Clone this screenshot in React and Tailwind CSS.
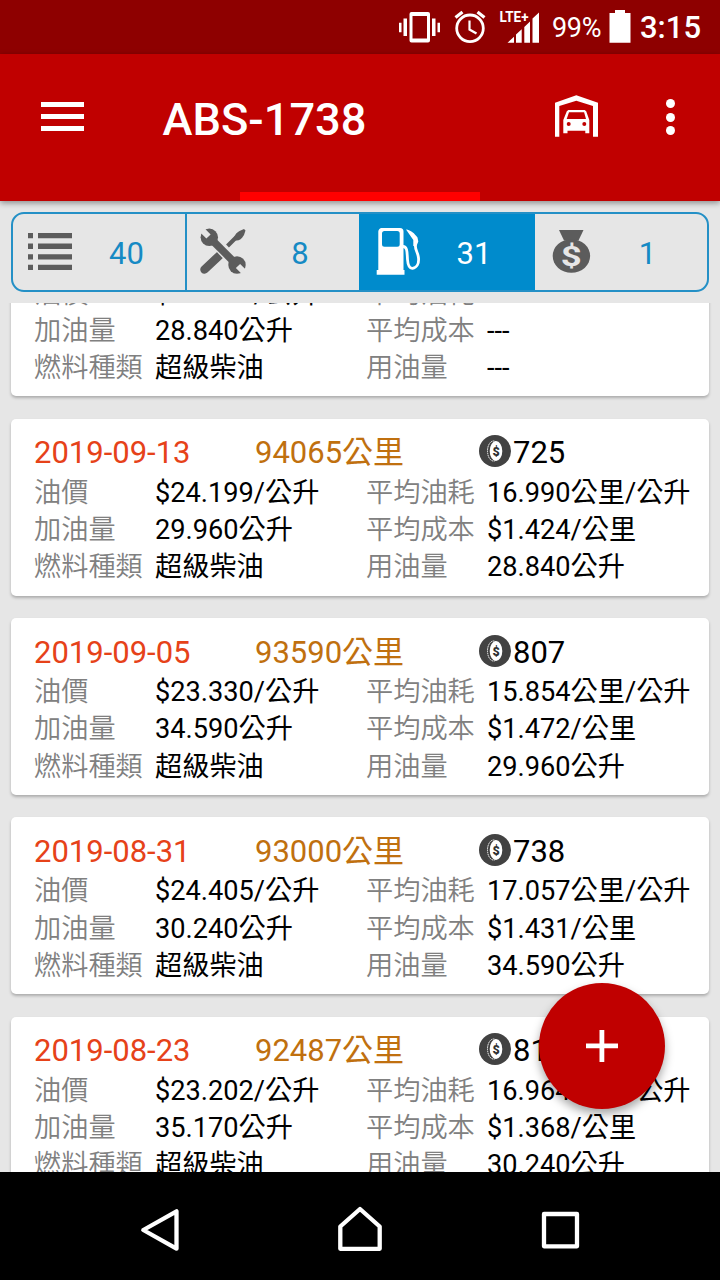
import React from 'react';

// The first record is scrolled so far up that its headline is out of view
const records = [
  {
    id: 1,
    price: '$24.199/公升',
    volume: '28.840公升',
    fuel: '超級柴油',
    economy: '---',
    cost: '---',
    used: '---',
  },
  {
    id: 2,
    date: '2019-09-13',
    odometer: '94065公里',
    total: '725',
    price: '$24.199/公升',
    volume: '29.960公升',
    fuel: '超級柴油',
    economy: '16.990公里/公升',
    cost: '$1.424/公里',
    used: '28.840公升',
  },
  {
    id: 3,
    date: '2019-09-05',
    odometer: '93590公里',
    total: '807',
    price: '$23.330/公升',
    volume: '34.590公升',
    fuel: '超級柴油',
    economy: '15.854公里/公升',
    cost: '$1.472/公里',
    used: '29.960公升',
  },
  {
    id: 4,
    date: '2019-08-31',
    odometer: '93000公里',
    total: '738',
    price: '$24.405/公升',
    volume: '30.240公升',
    fuel: '超級柴油',
    economy: '17.057公里/公升',
    cost: '$1.431/公里',
    used: '34.590公升',
  },
  {
    id: 5,
    date: '2019-08-23',
    odometer: '92487公里',
    total: '816',
    price: '$23.202/公升',
    volume: '35.170公升',
    fuel: '超級柴油',
    economy: '16.964公里/公升',
    cost: '$1.368/公里',
    used: '30.240公升',
  },
];

const VibrateIcon = () => (
  <svg width="43" height="34" viewBox="0 0 43 34" fill="white">
    <path fillRule="evenodd" d="M13.500 2h16.500a2 2 0 0 1 2 2v26.500a2 2 0 0 1-2 2H13.500a2 2 0 0 1-2-2V4a2 2 0 0 1 2-2zM14.500 6v22.500h14.500V6z" />
    <path d="M1 12.700h2.500v9.600H1zM5.500 8.500h3.500v17.500H5.500zM34 8.500h3.500v17.500H34zM39.500 12.700H42v9.600h-2.500z" />
  </svg>
);

const AlarmIcon = () => (
  <svg width="32" height="34" viewBox="0 0 32 34" fill="none" stroke="white" strokeWidth="2.800">
    <circle cx="16" cy="18.300" r="13.300" />
    <path d="M1.500 7.500l7-5.500M30.500 7.500l-7-5.500" strokeWidth="3.200" />
    <path d="M15.500 10.500v9l7 4" strokeWidth="2.200" />
  </svg>
);

const SignalIcon = () => (
  <svg width="42" height="34" viewBox="0 0 42 34" fill="white" className="overflow-visible">
    <text x="0.500" y="11.600" fontSize="15" fontWeight="700" textLength="29" lengthAdjust="spacingAndGlyphs">
      LTE+
    </text>
    <path d="M8.500 32.700l6.500-6v6zM17 24.500l5.700-5.200v13.400H17zM25.300 17l5.700-5.500v21.200h-5.700zM33.500 8.500L40 2.500v30.200h-6.500z" />
  </svg>
);

const BatteryIcon = () => (
  <svg width="22" height="34" viewBox="0 0 22 34" fill="white">
    <path d="M6 0h10v3h5.500v29.800H.5V3H6z" />
  </svg>
);

const GarageIcon = () => (
  <svg width="48" height="48" viewBox="0 0 48 48" fill="white">
    <path d="M3 44.700v-34l21.300-7.400L46 10.700v34h-5V14L24.300 8.700 7.300 14v30.700z" />
    <path
      fillRule="evenodd"
      d="M16.300 18h16.400l1.500 1.200L37.300 28v13.300h-4v-2.600H15.500v2.600h-4.200V28l3.500-8.800zM17 20.300L14.700 27H34l-1.900-6.700zM16.700 30a2 2 0 1 0 0 4 2 2 0 0 0 0-4zM32.300 30a2 2 0 1 0 0 4 2 2 0 0 0 0-4z"
    />
  </svg>
);

const ListIcon = () => (
  <svg width="48" height="48" viewBox="0 0 48 48" fill="#5c5c5c">
    <path d="M2 5h5v5.300H2zM12 5h34v5.300H12zM2 15.600h5v5.300H2zM12 15.600h34v5.300H12zM2 26.200h5v5.300H2zM12 26.200h34v5.300H12zM2 36.800h5v5.300H2zM12 36.800h34v5.300H12z" />
  </svg>
);

const ToolsIcon = () => (
  <svg width="48" height="48" viewBox="0 0 48 48" fill="none" stroke="#5c5c5c">
    {/* screwdriver */}
    <path d="M4.500 41.500L20 27" strokeWidth="8.500" strokeLinecap="round" />
    <path d="M27.500 18l9-9" strokeWidth="4" />
    <path d="M34.500 11c-.5-4 2-6 5-8l4.500-2 1.500 1.500-1.500 4.500c-2.500 4-5 6-8.500 5.500z" fill="#5c5c5c" stroke="none" />
    {/* wrench */}
    <path d="M12 11l23 24" stroke="#e6e6e6" strokeWidth="11" />
    <circle cx="9.300" cy="9.300" r="8.700" fill="#5c5c5c" stroke="none" />
    <circle cx="37" cy="37" r="8.700" fill="#5c5c5c" stroke="none" />
    <path d="M10 10l27 27" strokeWidth="7.500" />
    <path d="M-1-1l9.500 9.500M38 38l10 10" stroke="#e6e6e6" strokeWidth="6" />
  </svg>
);

const FuelIcon = () => (
  <svg width="48" height="48" viewBox="0 0 48 48" fill="white">
    <path
      fillRule="evenodd"
      d="M8 0h18a3.500 3.500 0 0 1 3.500 3.500V42h1v4.700H2.700V42h1.600V3.500A3.500 3.500 0 0 1 8 0zM10.500 3A2.500 2.500 0 0 0 8 5.500v10.700a2.500 2.500 0 0 0 2.500 2.500h12.700a2.500 2.500 0 0 0 2.500-2.500V5.500A2.500 2.500 0 0 0 23.200 3z"
    />
    <path
      d="M29 18.500c4.500 0 4 6 4.500 13 .5 7 2 9 5 8.800 4.500-.5 6.500-5 6-10.300-.5-6-4-8-3-14"
      fill="none"
      stroke="white"
      strokeWidth="2.800"
    />
    <path d="M32 1.500c5 .5 8.500 4 11.500 8l.8 4-2 5-3-.5V12z" />
  </svg>
);

const MoneyBagIcon = () => (
  <svg width="48" height="48" viewBox="0 0 48 48" fill="#5c5c5c">
    <path d="M11 2h24.500l-5 10.500H16z" />
    <ellipse cx="23.400" cy="28" rx="18.700" ry="16.800" />
    <text
      x="12.800"
      y="37.800"
      fontSize="28"
      fontWeight="700"
      textLength="21"
      lengthAdjust="spacingAndGlyphs"
      fill="#e6e6e6"
    >
      $
    </text>
  </svg>
);

const CoinIcon = () => (
  <svg width="32" height="32" viewBox="0 0 32 32" className="-mt-[3px]">
    <circle cx="16" cy="16" r="16" fill="#424242" />
    <ellipse cx="14.500" cy="16" rx="6" ry="10" fill="none" stroke="white" strokeWidth="1" strokeDasharray="1.500 .7" />
    <ellipse cx="17" cy="16" rx="6.300" ry="10" fill="white" />
    <text x="17" y="20.500" fontSize="12.500" fontWeight="900" textAnchor="middle" fill="#303030">
      $
    </text>
  </svg>
);

const tabs = [
  { icon: <ListIcon />, count: 40, style: 'w-[172px] pl-[13px] pr-[6px] text-[#168ac4]' },
  { icon: <ToolsIcon />, count: 8, style: 'w-[174px] border-l-2 border-[#2490c6] pl-[13px] pr-[7px] text-[#168ac4]' },
  { icon: <FuelIcon />, count: 31, style: 'w-[176px] bg-[#008bcc] pl-[15px] pr-[9px] text-white' },
  { icon: <MoneyBagIcon />, count: 1, style: 'flex-1 pl-[13px] pr-[8px] text-[#168ac4]' },
];

const StatusBar = () => (
  <div className="flex h-[54px] shrink-0 items-center justify-end bg-[#8e0000] pr-[18px] text-white">
    <VibrateIcon />
    <div className="ml-[13px]">
      <AlarmIcon />
    </div>
    <div className="ml-[13px]">
      <SignalIcon />
    </div>
    <span className="ml-[11px] w-[51px] pt-[3px] text-[27px] tracking-[-0.3px]">99%</span>
    <div className="ml-[6px]">
      <BatteryIcon />
    </div>
    <span className="ml-[9px] w-[62px] pt-[3px] text-[31px] font-medium">3:15</span>
  </div>
);

const AppBar = () => (
  <header className="relative z-10 flex h-[147px] shrink-0 flex-col bg-[#c00000] text-white shadow-[0_2px_6px_rgba(0,0,0,0.4)]">
    <div className="flex h-[126px] items-center pl-[41px] pr-[45px]">
      <button className="-mt-0.5 flex w-[43px] flex-col gap-[7px]">
        <span className="h-[5px] w-full bg-white" />
        <span className="h-[5px] w-full bg-white" />
        <span className="h-[5px] w-full bg-white" />
      </button>
      <h1 className="ml-[78.500px] flex-1 pt-1.5 text-[45.200px] font-medium leading-none">ABS-1738</h1>
      <div className="-mt-0.5 mr-px">
        <GarageIcon />
      </div>
      <button className="ml-[65px] flex flex-col gap-[4.500px]">
        <span className="size-[9px] rounded-full bg-white" />
        <span className="size-[9px] rounded-full bg-white" />
        <span className="size-[9px] rounded-full bg-white" />
      </button>
    </div>
    <div className="mx-auto mt-auto h-[9px] w-[240px] bg-[#ff0000]" />
  </header>
);

const TabBar = () => (
  <nav className="mx-[11px] mt-[11px] flex h-[80px] shrink-0 overflow-hidden rounded-[13px] border-2 border-[#2490c6]">
    {tabs.map((tab) => (
      <button key={tab.count} className={`flex items-center ${tab.style}`}>
        {tab.icon}
        <span className="flex-1 pt-[5px] text-center text-[31px]">{tab.count}</span>
      </button>
    ))}
  </nav>
);

const Row = ({ label, value, label2, value2 }) => (
  <div className="flex h-[37.300px] items-center whitespace-nowrap text-[27.200px] leading-none">
    <span className="w-[121px] font-[350] text-[#808080]">{label}</span>
    <span className="w-[211px]">{value}</span>
    <span className="w-[121px] font-[350] text-[#808080]">{label2}</span>
    <span>{value2}</span>
  </div>
);

const RecordCard = ({ record }) => (
  <article className="shrink-0 rounded-[5px] bg-white pb-[9px] pl-[23px] text-black shadow-[0_2px_3px_rgba(0,0,0,0.25)]">
    {record.date && (
      <div className="flex h-[56px] items-center whitespace-nowrap pt-[12px] text-[31px] leading-none">
        <span className="w-[221px] text-[#e64219]">{record.date}</span>
        <span className="w-[224px] text-[#c0700f]">{record.odometer}</span>
        <CoinIcon />
        <span className="ml-[2px]">{record.total}</span>
      </div>
    )}
    <Row label="油價" value={record.price} label2="平均油耗" value2={record.economy} />
    <Row label="加油量" value={record.volume} label2="平均成本" value2={record.cost} />
    <Row label="燃料種類" value={record.fuel} label2="用油量" value2={record.used} />
  </article>
);

const NavigationBar = () => (
  <footer className="flex h-[108px] shrink-0 items-center justify-center gap-[152px] bg-black pt-2">
    <svg width="48" height="48" viewBox="0 0 48 48" fill="none" stroke="white" strokeWidth="4.300" strokeLinejoin="round">
      <path d="M7.300 24L40.500 5.300v37.400z" />
    </svg>
    <svg width="48" height="48" viewBox="0 0 48 48" fill="none" stroke="white" strokeWidth="4.300" strokeLinejoin="round">
      <path d="M4.300 20.500L24 3l19.700 17.500v22.300H4.300z" />
    </svg>
    <svg width="48" height="48" viewBox="0 0 48 48" fill="none" stroke="white" strokeWidth="4.300" strokeLinejoin="round">
      <path d="M8 8h33v32.300H8z" />
    </svg>
  </footer>
);

export default function App() {
  return (
    <div className="relative flex h-[1280px] w-[720px] flex-col overflow-hidden bg-[#e6e6e6] font-[Roboto,'Noto_Sans_CJK_TC',sans-serif]">
      <StatusBar />
      <AppBar />
      <TabBar />
      <main className="mt-[11px] min-h-0 flex-1 overflow-hidden px-[11px]">
        <div className="-mt-[27.500px] flex flex-col gap-[22.400px]">
          {records.map((record) => (
            <RecordCard key={record.id} record={record} />
          ))}
        </div>
      </main>
      <NavigationBar />

      {/* Add record button, floats over the list */}
      <button className="absolute left-[539px] top-[983px] z-20 flex size-[126px] items-center justify-center rounded-full bg-[#c00000] shadow-[0_5px_10px_rgba(0,0,0,0.35)]">
        <svg width="32" height="32" viewBox="0 0 32 32" fill="white">
          <path d="M13.500 0h4.800v13.500H32v4.800H18.300V32h-4.800V18.300H0v-4.800h13.500z" />
        </svg>
      </button>
    </div>
  );
}
